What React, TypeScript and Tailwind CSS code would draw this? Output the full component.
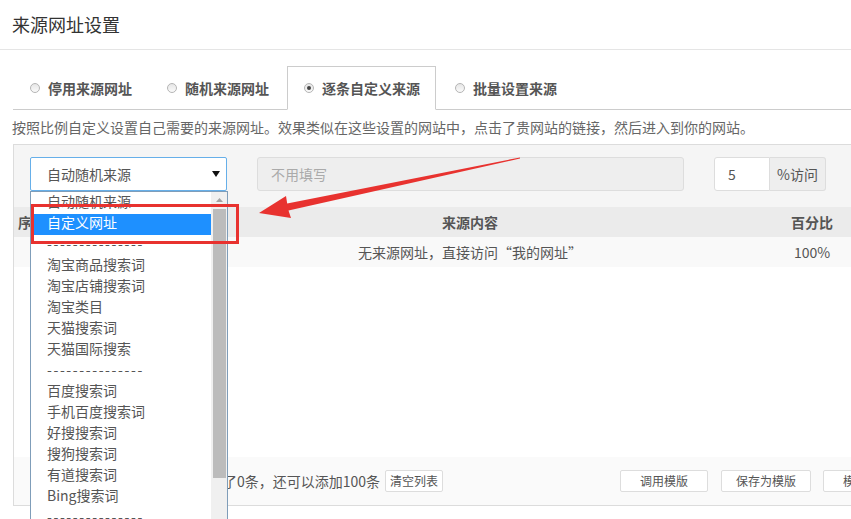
import React from "react";

const tabs = [
  { label: "停用来源网址", active: false },
  { label: "随机来源网址", active: false },
  { label: "逐条自定义来源", active: true },
  { label: "批量设置来源", active: false },
];

const options = [
  "自动随机来源",
  "自定义网址",
  "---------------",
  "淘宝商品搜索词",
  "淘宝店铺搜索词",
  "淘宝类目",
  "天猫搜索词",
  "天猫国际搜索",
  "---------------",
  "百度搜索词",
  "手机百度搜索词",
  "好搜搜索词",
  "搜狗搜索词",
  "有道搜索词",
  "Bing搜索词",
  "---------------",
];

function Radio({ checked }: { checked: boolean }) {
  return (
    <span className="w-[10px] h-[10px] rounded-full border border-[#b5b5b5] bg-gradient-to-b from-[#e6e6e6] to-[#fafafa] flex items-center justify-center shrink-0">
      {checked && <span className="w-[4px] h-[4px] rounded-full bg-[#444]" />}
    </span>
  );
}

export default function App() {
  return (
    <div className="relative w-[851px] h-[519px] overflow-hidden bg-white text-[#555] font-['Noto_Sans_CJK_SC','Noto_Sans',sans-serif]">
      <div className="h-[50px] border-b border-[#e5e5e5] pl-[12px] flex items-center text-[18px] text-[#333]">
        来源网址设置
      </div>

      <div className="ml-[13px] mt-[16px] flex items-end border-b border-[#ccc]">
        {tabs.map((t) => (
          <div
            key={t.label}
            className={`h-[44px] -mb-px mr-[2px] pl-[16px] pr-[15px] flex items-center gap-[8px] border ${
              t.active ? "border-[#ccc] border-b-white bg-white" : "border-transparent"
            }`}
          >
            <Radio checked={t.active} />
            <span className="text-[14px] font-bold text-[#555] leading-none">{t.label}</span>
          </div>
        ))}
      </div>

      <div className="h-[34px] pl-[12px] flex items-center text-[14px] text-[#666]">
        按照比例自定义设置自己需要的来源网址。效果类似在这些设置的网站中，点击了贵网站的链接，然后进入到你的网站。
      </div>

      <div className="ml-[13px] w-[900px] border border-[#dcdcdc] text-[14px]">
        <div className="bg-[#f5f5f5] pt-[12px] pb-[16px] pl-[16px] flex items-center">
          <div className="w-[197px] h-[34px] border border-[#66afe9] bg-white rounded-[2px] flex items-center pl-[16px] pr-[6px] text-[#555]">
            自动随机来源
            <svg className="ml-auto" width="8" height="6" viewBox="0 0 8 6">
              <path d="M0 0h8L4 6z" fill="#111" />
            </svg>
          </div>
          <div className="ml-[30px] w-[427px] h-[34px] border border-[#ddd] bg-[#eee] rounded-[3px] pl-[13px] flex items-center text-[#aaa]">
            不用填写
          </div>
          <div className="ml-[30px] flex">
            <div className="w-[56px] h-[34px] bg-white border border-[#ddd] rounded-l-[3px] pl-[13px] flex items-center text-[#555]">
              5
            </div>
            <div className="w-[56px] h-[34px] bg-[#eee] border border-l-0 border-[#ddd] rounded-r-[3px] flex items-center justify-center text-[#555]">
              %访问
            </div>
          </div>
        </div>

        <div className="grid grid-cols-[144px_624px_60px_1fr] h-[30px] bg-[#ebebeb] font-bold items-center">
          <div className="pl-[4px]">序号</div>
          <div className="text-center">来源内容</div>
          <div className="text-center">百分比</div>
          <div className="pl-[20px]">操作</div>
        </div>
        <div className="grid grid-cols-[144px_624px_60px_1fr] h-[30px] bg-[#f9f9f9] items-center">
          <div className="pl-[24px]">1</div>
          <div className="text-center">无来源网址，直接访问“我的网址”</div>
          <div className="text-center">100%</div>
          <div />
        </div>
        <div className="h-[190px] bg-white" />

        <div className="h-[48px] bg-[#fafafa] flex items-center">
          <span className="w-[366px] text-right whitespace-nowrap">列表中已添加了0条，还可以添加100条</span>
          <button className="ml-[5px] w-[58px] h-[22px] bg-white border border-[#ddd] rounded-[2px] text-[12px] text-[#555]">
            清空列表
          </button>
          <button className="ml-[177px] w-[88px] h-[22px] bg-white border border-[#ddd] rounded-[2px] text-[12px] text-[#555]">
            调用模版
          </button>
          <button className="ml-[13px] w-[90px] h-[22px] bg-white border border-[#ddd] rounded-[2px] text-[12px] text-[#555]">
            保存为模版
          </button>
          <button className="ml-[12px] w-[88px] h-[22px] bg-white border border-[#ddd] rounded-[2px] text-[12px] text-[#555]">
            模版管理
          </button>
        </div>
      </div>

      {/* open select list */}
      <div className="absolute left-[30px] top-[191px] w-[198px] h-[340px] border border-[#7f9db9] bg-white flex text-[14px] text-[#555]">
        <div className="flex-1 pt-px">
          {options.map((o, i) => (
            <div
              key={i}
              className={`ml-[2px] h-[21px] leading-[17px] pl-[14px] whitespace-nowrap ${
                i === 1 ? "bg-[#1e90ff] text-white" : ""
              } ${o.startsWith("-") ? "tracking-[1.6px]" : ""}`}
            >
              {o}
            </div>
          ))}
        </div>
        <div className="w-[16px] bg-[#f0f0f0] flex flex-col items-center">
          <svg className="mt-[6px]" width="7" height="4" viewBox="0 0 7 4">
            <path d="M0 4L3.5 0 7 4z" fill="#a3a3a3" />
          </svg>
          <div className="mt-[7px] w-[13px] h-[269px] bg-[#bcbcbc]" />
        </div>
      </div>

      {/* annotation */}
      <div className="absolute left-[31px] top-[204px] w-[208px] h-[40px] border-[3px] border-[#e8322f]" />
      <svg className="absolute left-0 top-0 pointer-events-none" width="851" height="519" viewBox="0 0 851 519">
        <polygon
          points="259,213 291,218 288.5,210.5 520,158.6 520,157.4 287.2,203.4 286,196"
          fill="#e8322f"
        />
      </svg>
    </div>
  );
}
